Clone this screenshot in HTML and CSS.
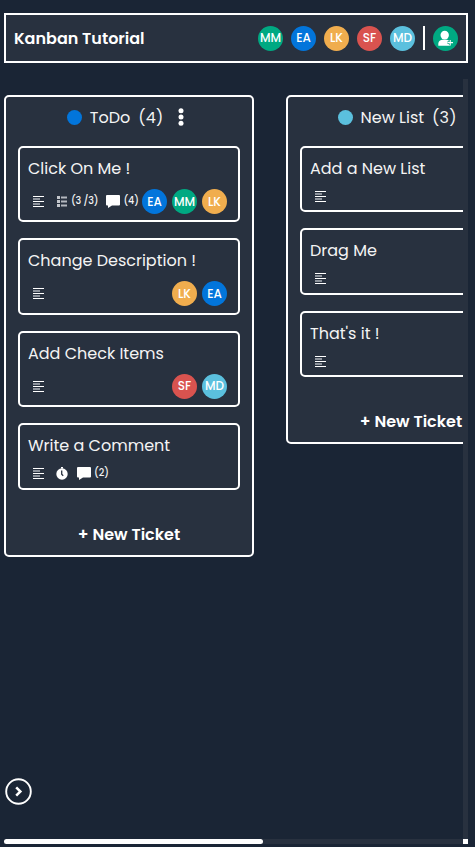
FILE: index.html
```html
<!DOCTYPE html>
<html lang="en">
<head>
<meta charset="utf-8">
<title>Kanban Tutorial</title>
<link rel="stylesheet" href="styles.css">
</head>
<body>
<svg class="defs" width="0" height="0">
  <symbol id="desc" viewBox="0 0 11 11"><path fill="#fff" d="M0 0h11v1H0zM0 5h11v1H0zM0 10h11v1H0z"/><path fill="#8d939c" d="M0 2h7v2H0zM0 7h7v2H0z"/></symbol>
  <symbol id="check" viewBox="0 0 10 11"><path fill="#c4c7cc" d="M0 0h3v3H0zM0 4h3v3H0zM0 8h3v3H0z"/><path fill="#b4b8bf" d="M4 .5h6v2H4zM4 4.500h6v2H4zM4 8.500h6v2H4z"/></symbol>
  <symbol id="comment" viewBox="0 0 14 13"><path fill="#fff" d="M1 0h12a1 1 0 0 1 1 1v8.500a1 1 0 0 1-1 1H6L2 13v-2.500H1a1 1 0 0 1-1-1V1a1 1 0 0 1 1-1z"/></symbol>
  <symbol id="clock" viewBox="0 0 12 13"><path fill="#fff" d="M5 0h2v1.500H5z"/><circle cx="6" cy="7" r="5.700" fill="#fff"/><path d="M5.700 3.500v3.700l1.500 1.600" fill="none" stroke="#28313f" stroke-width="1.300"/></symbol>
</svg>
<header class="topbar">
  <h1 class="brand">Kanban Tutorial</h1>
  <div class="team">
    <span class="avatar green">MM</span><span class="avatar blue">EA</span><span class="avatar orange">LK</span><span class="avatar red">SF</span><span class="avatar sky">MD</span>
  </div>
  <span class="divider"></span>
  <button class="avatar green add" aria-label="Add member"><svg width="17" height="17" viewBox="0 0 17 17"><ellipse cx="7.700" cy="5.100" rx="4.200" ry="4.300" fill="#fff"/><path fill="#fff" d="M1.300 15.800v-2C1.300 11.400 3 10.300 5 9.800h5c1.800.4 3 1.300 3.500 2.500v3.500z"/><path d="M13.200 9.900v5.400M10.500 12.600h5.500" stroke="#00a982" stroke-width="2.600"/><path d="M13.200 9.900v5.400M10.500 12.600h5.500" stroke="#fff" stroke-width="1.100"/></svg></button>
</header>
<main class="board">
  <div class="lists">
    <section class="list">
      <div class="list-head"><span class="dot blue"></span><h2>ToDo</h2><span class="count">(4)</span><svg class="more" width="6" height="18" viewBox="0 0 6 18"><circle cx="3" cy="2.700" r="2.500"/><circle cx="3" cy="9" r="2.500"/><circle cx="3" cy="15.300" r="2.500"/></svg></div>
      <article class="card tall">
        <h3>Click On Me !</h3>
        <div class="meta"><svg class="desc"><use href="#desc"/></svg><svg class="check"><use href="#check"/></svg><span class="num items">(3 /3)</span><svg class="comment"><use href="#comment"/></svg><span class="num">(4)</span>
          <div class="members"><span class="avatar blue">EA</span><span class="avatar green">MM</span><span class="avatar orange">LK</span></div></div>
      </article>
      <article class="card tall">
        <h3>Change Description !</h3>
        <div class="meta"><svg class="desc"><use href="#desc"/></svg><div class="members"><span class="avatar orange">LK</span><span class="avatar blue">EA</span></div></div>
      </article>
      <article class="card tall">
        <h3>Add Check Items</h3>
        <div class="meta"><svg class="desc"><use href="#desc"/></svg><div class="members"><span class="avatar red">SF</span><span class="avatar sky">MD</span></div></div>
      </article>
      <article class="card">
        <h3>Write a Comment</h3>
        <div class="meta"><svg class="desc"><use href="#desc"/></svg><svg class="clock"><use href="#clock"/></svg><svg class="comment"><use href="#comment"/></svg><span class="num">(2)</span></div>
      </article>
      <div class="new"><span>+ New Ticket</span></div>
    </section>
    <section class="list">
      <div class="list-head"><span class="dot sky"></span><h2>New List</h2><span class="count">(3)</span><svg class="more" width="6" height="18" viewBox="0 0 6 18"><circle cx="3" cy="2.700" r="2.500"/><circle cx="3" cy="9" r="2.500"/><circle cx="3" cy="15.300" r="2.500"/></svg></div>
      <article class="card"><h3>Add a New List</h3><div class="meta"><svg class="desc"><use href="#desc"/></svg></div></article>
      <article class="card"><h3>Drag Me</h3><div class="meta"><svg class="desc"><use href="#desc"/></svg></div></article>
      <article class="card"><h3>That's it !</h3><div class="meta"><svg class="desc"><use href="#desc"/></svg></div></article>
      <div class="new"><span>+ New Ticket</span></div>
    </section>
  </div>
  <div class="vtrack"></div>
  <div class="htrack"><div class="thumb"></div></div>
  <div class="corner"></div>
</main>
<button class="expand" aria-label="Open menu"><svg width="27" height="27" viewBox="0 0 27 27" fill="none" stroke="#fff"><circle cx="13.500" cy="13.500" r="12.300" stroke-width="1.900"/><path d="M11.200 9.300l4.200 4.200-4.200 4.200" stroke-width="2.500"/></svg></button>
</body>
</html>
```
FILE: styles.css
```css
* { box-sizing: border-box; }
body {
  margin: 0; height: 847px; overflow: hidden; padding: 13px 7px 3px 4px;
  display: flex; flex-direction: column; gap: 16px;
  background: #1a2535; color: #f4f4f4;
  font-family: Poppins, Inter, sans-serif; font-size: 16px;
}
h1, h2, h3 { margin: 0; font-size: 16px; font-weight: 400; white-space: nowrap; }
button { border: 0; background: none; padding: 0; font: inherit; }
svg { display: block; flex: none; }
.defs { position: absolute; }
.topbar { height: 50px; flex: none; border: 2px solid #fff; background: #28313f; display: flex; align-items: center; padding: 0 8px; }
.brand { font-weight: 600; color: #fff; flex: 1; }
.team { display: flex; gap: 8px; }
.avatar {
  width: 25px; height: 25px; border-radius: 50%; color: #fff; flex: none;
  display: flex; align-items: center; justify-content: center; font-size: 12px; font-weight: 500;
}
.green { background: #00a982; }
.blue { background: #0275db; }
.orange { background: #f0ad4e; }
.red { background: #d9534f; }
.sky { background: #5bc0de; }
.divider { width: 2px; height: 24px; background: #fff; margin: 0 8px; }
.board { height: 765px; display: grid; grid-template-columns: 459px 5px; grid-template-rows: 760px 5px; }
.lists { display: flex; align-items: flex-start; gap: 32px; padding-top: 16px; overflow: hidden; }
.list { width: 250px; flex: none; border: 2px solid #fff; border-radius: 5px; background: #28313f; padding: 0 12px; display: flex; flex-direction: column; }
.list-head { height: 49px; padding: 0 6.4px 9px 0; display: flex; align-items: center; justify-content: center; }
.dot { width: 15px; height: 15px; border-radius: 50%; margin-right: 7.6px; }
.count { margin: 0 15px 0 8px; letter-spacing: .2px; }
.more { fill: #fff; }
.card { height: 66.4px; border: 2px solid #fff; border-radius: 5px; padding: 8px 11px 0 8px; margin-bottom: 16px; }
.card.tall { height: 76.4px; }
.card h3 { height: 25px; line-height: 26px; }
.meta { display: flex; align-items: center; height: 17px; margin-top: 7px; padding-left: 5px; }
.tall .meta { height: 27px; }
.desc { width: 11px; height: 11px; }
.check { width: 10px; height: 11px; margin: 0 4.500px 0 12.500px; }
.clock { width: 12px; height: 13px; margin: 0 9px 0 12px; }
.comment { width: 14px; height: 13px; margin-right: 3px; }
.num { font-size: 9.6px; font-weight: 500; white-space: nowrap; padding-bottom: 2px; }
.items { margin-right: 8px; letter-spacing: -.15px; }
.members { display: flex; gap: 5px; margin-left: auto; }
.new { height: 49px; padding-top: 17px; display: flex; justify-content: center; font-weight: 600; line-height: 24px; white-space: nowrap; color: #fff; }
.vtrack, .htrack { background: #28313f; }
.thumb { width: 259px; height: 5px; border-radius: 3px; background: #fff; }
.corner { background: #fff; }
.expand { position: absolute; left: 5px; top: 778px; }
```
